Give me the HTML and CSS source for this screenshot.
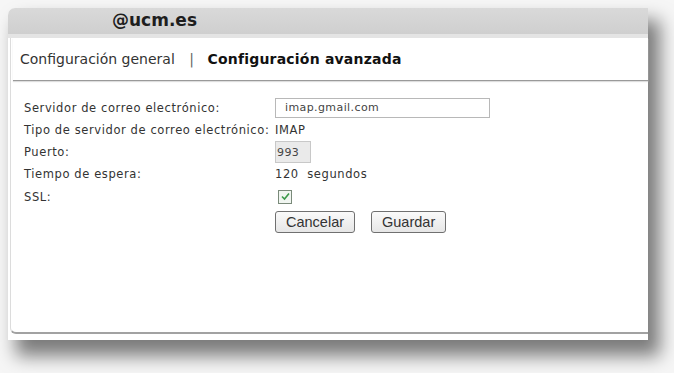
FILE: index.html
```html
<!DOCTYPE html>
<html>
<head>
  <title>Configuración avanzada</title>
  <link rel="stylesheet" href="styles.css">
</head>
<body>

<div class="window">
  <div class="titlebar">@ucm.es</div>
  <div class="panel">
    <div class="tabs">
      <span class="tab">Configuración general</span>
      <span class="sep">|</span>
      <span class="tab active">Configuración avanzada</span>
    </div>
    <form class="settings">
      <label>Servidor de correo electrónico:</label>
      <div><input type="text" class="server" value="imap.gmail.com"></div>
      <label>Tipo de servidor de correo electrónico:</label>
      <div>IMAP</div>
      <label>Puerto:</label>
      <div><input type="text" class="port" value="993"></div>
      <label>Tiempo de espera:</label>
      <div>120&nbsp; segundos</div>
      <label>SSL:</label>
      <div><span class="check"><svg width="9" height="9" viewBox="0 0 9 9"><path d="M1 4.5 L3.5 7 L8 1.5" fill="none" stroke="#3c9a4a" stroke-width="1.6"/></svg></span></div>
      <div></div>
      <div class="buttons">
        <button type="button">Cancelar</button>
        <button type="button">Guardar</button>
      </div>
    </form>
  </div>
</div>

</body>
</html>
```

FILE: styles.css
```css
body {
  margin: 0;
  background: #f6f6f6;
  font-family: "DejaVu Sans", Verdana, sans-serif;
  height: 373px;
  overflow: hidden;
}
.window {
  margin: 8px 0 0 8px;
  width: 640px;
  height: 332px;
  background: #fff;
  border-top-left-radius: 7px;
  box-shadow: 10px 14px 18px 2px rgba(0, 0, 0, 0.5);
  display: flex;
  flex-direction: column;
}
.titlebar {
  height: 26px;
  background: linear-gradient(#d9d9d9, #cfcfcf);
  border-top-left-radius: 7px;
  border-bottom: 4px solid #e4e4e4;
  padding-left: 104px;
  font-weight: bold;
  font-size: 17px;
  line-height: 24px;
  color: #1e1e1e;
}
.panel {
  flex: 1;
  margin: 0 0 6px 2px;
  border-left: 1px solid #dcdcdc;
  border-bottom: 2px solid #a2a2a2;
  border-bottom-left-radius: 6px;
}
.tabs {
  height: 42px;
  margin-left: 2px;
  border-bottom: 1px solid #9a9a9a;
  box-shadow: 0 1px 1px #dedede;
  padding-left: 7px;
  font-size: 14px;
  line-height: 43px;
  color: #333;
}
.sep {
  margin: 0 9px 0 10px;
  color: #666;
}
.tab.active {
  font-weight: bold;
  letter-spacing: 0.2px;
  color: #111;
}
.settings {
  display: grid;
  grid-template-columns: 251px auto;
  grid-template-rows: 23px 22px 22px 22px 24px auto;
  align-items: center;
  padding: 15px 0 0 13px;
  font-size: 11.5px;
  letter-spacing: 0.6px;
  color: #333;
}
.settings input {
  font-family: "DejaVu Sans", Verdana, sans-serif;
  font-size: 11px;
  letter-spacing: 0.4px;
  color: #444;
  margin: 0;
  box-sizing: border-box;
}
.server {
  width: 215px;
  height: 20px;
  border: 1px solid #b8b8b8;
  padding: 0 0 0 9px;
}
.port {
  width: 36px;
  height: 22px;
  border: 1px solid #c8c8c8;
  background: #eaeaea;
  padding: 0 0 0 1px;
}
.check {
  display: inline-flex;
  align-items: center;
  justify-content: center;
  width: 12px;
  height: 12px;
  margin-left: 3px;
  border: 1px solid #7a8a7a;
  background: #f1f6f1;
}
.buttons {
  display: flex;
  gap: 16px;
  align-self: start;
  margin-top: 2px;
}
button {
  font-family: "Liberation Sans", Arial, sans-serif;
  font-size: 14.5px;
  color: #333;
  height: 22px;
  padding: 0 10px;
  background: linear-gradient(#fafafa, #e6e6e6);
  border: 1px solid #707070;
  border-radius: 3px;
}
```
